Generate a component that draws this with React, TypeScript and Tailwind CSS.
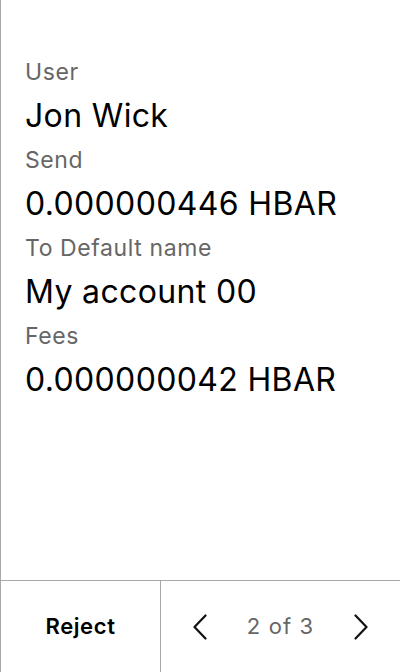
import React from "react";

type Row = { label: string; value: string };

const rows: Row[] = [
  { label: "User", value: "Jon Wick" },
  { label: "Send", value: "0.000000446 HBAR" },
  { label: "To Default name", value: "My account 00" },
  { label: "Fees", value: "0.000000042 HBAR" },
];

function Chevron({ dir }: { dir: "left" | "right" }) {
  return (
    <svg width="14" height="26" viewBox="0 0 14 26" fill="none" stroke="#111" strokeWidth="2.2" strokeLinecap="round" strokeLinejoin="round">
      {dir === "left" ? <polyline points="12.5,1.5 1.5,13 12.5,24.5" /> : <polyline points="1.5,1.5 12.5,13 1.5,24.5" />}
    </svg>
  );
}

export default function App() {
  return (
    <div className="flex flex-col w-[400px] h-[672px] bg-white border-l border-[#a8a8a8] font-['Inter',sans-serif]">
      <div className="flex-1 flex flex-col px-6 pt-[52px]">
        {rows.map((r) => (
          <div key={r.label} className="flex flex-col">
            <div className="text-[23px] leading-[40px] tracking-[0.6px] text-[#666]">{r.label}</div>
            <div className="text-[32px] leading-[48px] tracking-[0.35px] text-black">{r.value}</div>
          </div>
        ))}
      </div>
      <div className="flex h-[92px] border-t border-[#a8a8a8]">
        <button className="w-[159px] flex items-center justify-center text-[22px] font-semibold tracking-[0.6px] text-black">
          Reject
        </button>
        <div className="flex-1 flex items-center justify-between border-l border-[#a8a8a8] px-8">
          <Chevron dir="left" />
          <span className="text-[22px] tracking-[1.1px] text-[#666]">2 of 3</span>
          <Chevron dir="right" />
        </div>
      </div>
    </div>
  );
}
